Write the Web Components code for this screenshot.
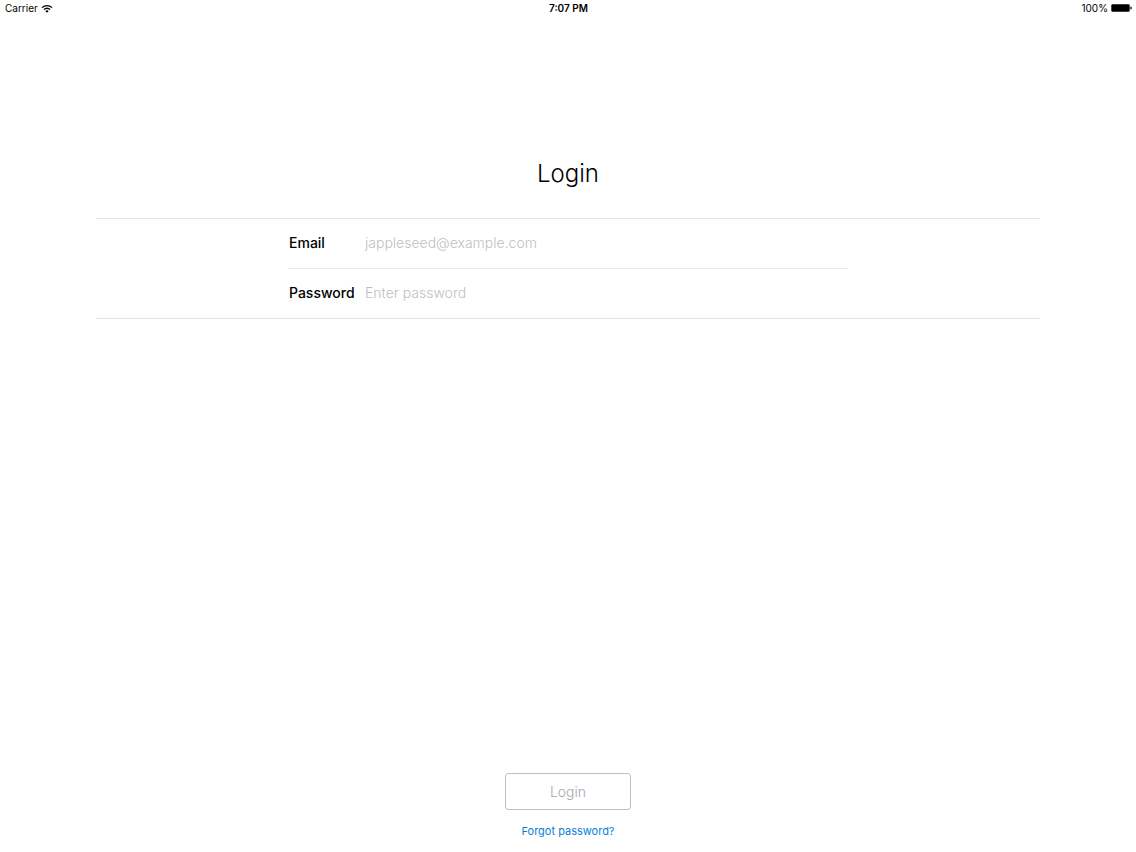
<!DOCTYPE html>
<html lang="en">
<head>
<meta charset="utf-8">
<meta name="viewport" content="width=device-width, initial-scale=1">
<title>Login</title>
<style>
  body { margin: 0; background: #fff; color: #000; font-family: Inter, "Liberation Sans", sans-serif; }
</style>
</head>
<body>
<login-screen></login-screen>

<script>
const define = (name, html, setup) => {
  const template = document.createElement('template');
  template.innerHTML = html;
  customElements.define(name, class extends HTMLElement {
    constructor() {
      super();
      this.attachShadow({ mode: 'open' }).append(template.content.cloneNode(true));
    }
    connectedCallback() { if (setup) setup(this, this.shadowRoot); }
  });
};

define('status-bar', `
  <style>
    :host { display: grid; grid-template-columns: 1fr auto 1fr; align-items: center; height: 16px; padding: 0 4px 0 5px; font-size: 10px; line-height: 16px; }
    div { display: flex; align-items: center; gap: 3px; }
    .time { font-weight: 600; }
    .power { justify-content: flex-end; }
    svg { display: block; }
  </style>
  <div><span>Carrier</span>
    <svg width="12" height="9" viewBox="0 0 12 9" fill="none" stroke="#000" stroke-width="1.3" aria-hidden="true">
      <path d="M1 3.6C3.8.9 8.2.9 11 3.6M2.9 5.6c1.8-1.6 4.4-1.6 6.2 0"/>
      <path d="M6 8.8 4.3 7q1.7-1.3 3.4 0z" fill="#000" stroke="none"/>
    </svg>
  </div>
  <div class="time">7:07 PM</div>
  <div class="power"><span>100%</span>
    <svg width="21" height="8" viewBox="0 0 21 8" aria-hidden="true">
      <rect x=".3" y=".3" width="18.4" height="7.4" rx="1.2" fill="#000"/>
      <path d="M19.4 2.6q1.4.2 1.4 1.4t-1.4 1.4z" fill="#000"/>
    </svg>
  </div>`);

define('text-field', `
  <style>
    :host { display: grid; grid-template-columns: 77px 1fr; align-items: start; height: 49px; font-size: 14px; line-height: 20px; }
    label { padding: 14px 0 14px 1px; font-weight: 500; }
    input { box-sizing: border-box; width: 100%; min-width: 0; height: 46px; margin: 0; padding: 0; border: 0; outline: 0; background: none; color: #000; font: inherit; font-weight: 300; }
    input::placeholder { color: #bfbec4; opacity: 1; }
  </style>
  <label for="input"></label><input id="input">`,
  (host, root) => {
    root.querySelector('label').textContent = host.getAttribute('label');
    const input = root.querySelector('input');
    input.type = host.getAttribute('type') || 'text';
    input.placeholder = host.getAttribute('placeholder');
  });

define('field-list', `
  <style>
    :host { display: block; border: solid #e4e4e6; border-width: 1px 0; }
    .inner { max-width: 560px; margin: 0 auto; }
    ::slotted(:not(:last-child)) { border-bottom: 1px solid #ebeaed; }
  </style>
  <div class="inner"><slot></slot></div>`);

define('outline-button', `
  <style>
    :host { display: block; }
    button { box-sizing: border-box; display: block; min-width: 126px; height: 37px; margin: 0; padding: 0 16px; border: 1px solid #c0bfc3; border-radius: 3px; background: #fff; color: #a9a8ad; font: inherit; font-size: 14px; font-weight: 300; line-height: 20px; }
  </style>
  <button type="button"><slot></slot></button>`);

define('text-link', `
  <style>
    :host { display: block; font-size: 11px; line-height: 16px; }
    a { color: #0a7fd9; text-decoration: none; }
  </style>
  <a href="#forgot"><slot></slot></a>`);

define('login-screen', `
  <style>
    :host { display: flex; flex-direction: column; min-height: 100vh; }
    main { flex: 1; padding: 142px 96px 32px; }
    h1 { margin: 0 0 28px; font-size: 24px; line-height: 32px; font-weight: 300; text-align: center; }
    footer { display: flex; flex-direction: column; align-items: center; gap: 13px; padding-bottom: 13px; }
  </style>
  <status-bar></status-bar>
  <main>
    <h1>Login</h1>
    <field-list>
      <text-field label="Email" type="email" placeholder="jappleseed@example.com"></text-field>
      <text-field label="Password" type="password" placeholder="Enter password"></text-field>
    </field-list>
  </main>
  <footer>
    <outline-button>Login</outline-button>
    <text-link>Forgot password?</text-link>
  </footer>`);
</script>
</body>
</html>
